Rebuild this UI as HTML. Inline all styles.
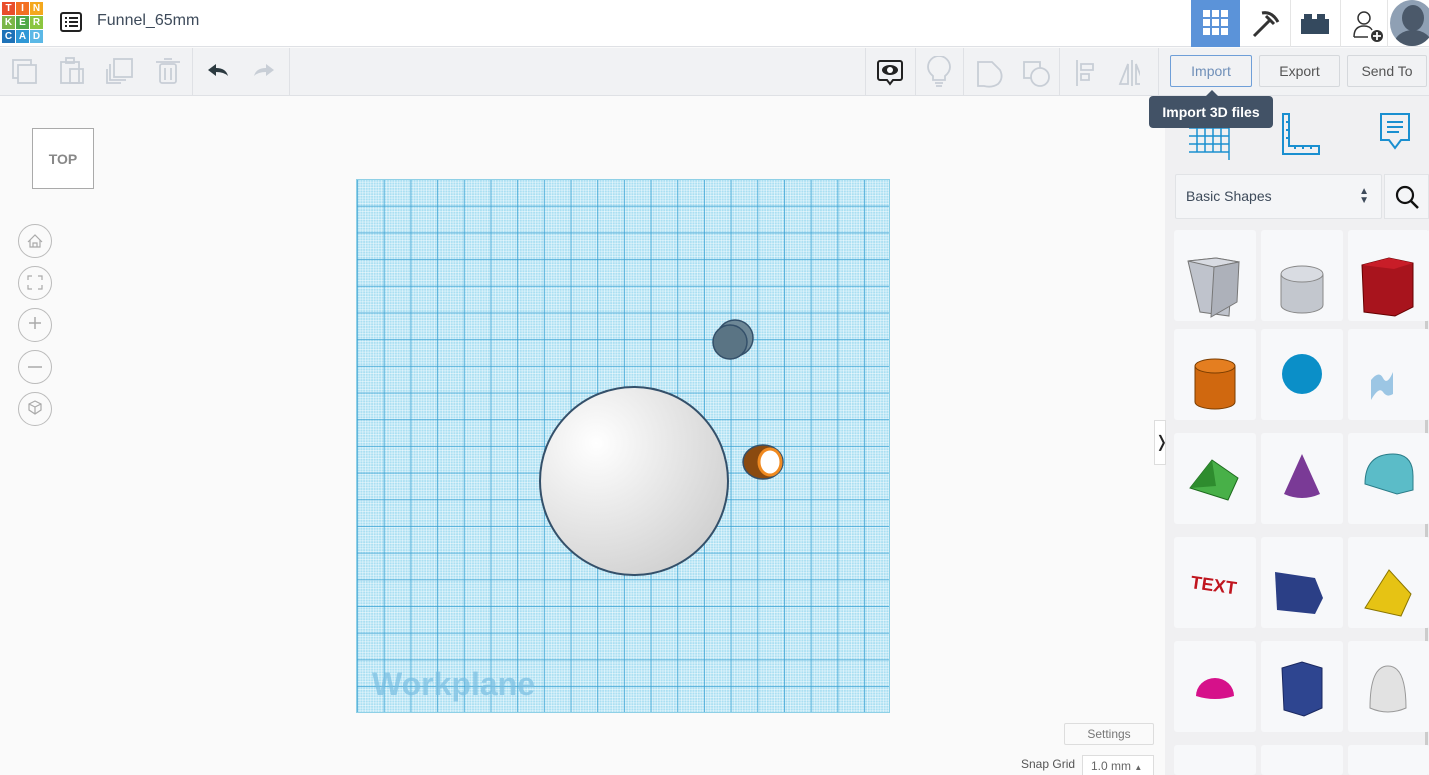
<!DOCTYPE html>
<html><head><meta charset="utf-8">
<style>
*{margin:0;padding:0;box-sizing:border-box}
html,body{width:1429px;height:775px;overflow:hidden}
body{background:#fafafa;font-family:"Liberation Sans",sans-serif;position:relative}
.abs{position:absolute}
#hdr{left:0;top:0;width:1429px;height:47px;background:#fff;border-bottom:1px solid #dfe1e5}
#tb{left:0;top:48px;width:1429px;height:48px;background:#f1f2f4;border-bottom:1px solid #dfe1e5}
.logo div{position:absolute;width:13px;height:13px;color:#fff;font-size:10px;font-weight:bold;text-align:center;line-height:13px}
.sep{position:absolute;top:48px;width:1px;height:47px;background:#dfe1e5}
.btn{position:absolute;top:55px;height:32px;border:1px solid #d5d8dc;border-radius:2px;font-size:14px;color:#555;text-align:center;line-height:30px;background:#f1f2f4}
#panel{left:1165px;top:96px;width:264px;height:679px;background:#f0f0f2}
.tile{position:absolute;width:82px;height:91px;background:#f7f8fa;border-radius:3px}
.circ{position:absolute;left:18px;width:34px;height:34px;border:1px solid #bbb;border-radius:50%;background:#fafafa}
#wp{left:356px;top:179px;width:534px;height:534px;background-color:#aadff2;
background-image:
linear-gradient(90deg,rgba(55,160,210,.75) 1px,transparent 1px),
linear-gradient(0deg,rgba(55,160,210,.75) 1px,transparent 1px),
linear-gradient(90deg,rgba(255,255,255,.5) 1px,transparent 1px),
linear-gradient(0deg,rgba(255,255,255,.5) 1px,transparent 1px);
background-size:26.7px 26.7px,26.7px 26.7px,2.67px 2.67px,2.67px 2.67px;border:1px solid #8fd0e6}
</style></head><body>
<div id="hdr" class="abs"></div>
<div class="abs logo" style="left:2px;top:2px;width:44px;height:44px">
<div style="left:0;top:0;background:#e94e2b">T</div><div style="left:14px;top:0;background:#f37021">I</div><div style="left:28px;top:0;background:#f4a81d">N</div>
<div style="left:0;top:14px;background:#7bb648">K</div><div style="left:14px;top:14px;background:#4fa847">E</div><div style="left:28px;top:14px;background:#8cc63f">R</div>
<div style="left:0;top:28px;background:#1e72b8">C</div><div style="left:14px;top:28px;background:#2f98d6">A</div><div style="left:28px;top:28px;background:#5bb8e6">D</div>
</div>
<svg class="abs" style="left:60px;top:11px" width="22" height="22" viewBox="0 0 22 22"><rect x="1" y="2" width="20" height="18" rx="2" fill="none" stroke="#222" stroke-width="2"/><g fill="#222"><rect x="5" y="6" width="2" height="2"/><rect x="9" y="6" width="9" height="2"/><rect x="5" y="10" width="2" height="2"/><rect x="9" y="10" width="9" height="2"/><rect x="5" y="14" width="2" height="2"/><rect x="9" y="14" width="9" height="2"/></g></svg>
<div class="abs" style="left:97px;top:12px;font-size:16px;color:#3d4a5a">Funnel_65mm</div>
<div class="abs" style="left:1191px;top:0;width:49px;height:47px;background:#5b93d9"></div>
<svg class="abs" style="left:1203px;top:10px" width="26" height="26"><g fill="#fff"><rect x="0" y="0" width="7" height="7"/><rect x="9" y="0" width="7" height="7"/><rect x="18" y="0" width="7" height="7"/><rect x="0" y="9" width="7" height="7"/><rect x="9" y="9" width="7" height="7"/><rect x="18" y="9" width="7" height="7"/><rect x="0" y="18" width="7" height="7"/><rect x="9" y="18" width="7" height="7"/><rect x="18" y="18" width="7" height="7"/></g></svg>
<svg class="abs" style="left:1250px;top:8px" width="32" height="32"><path d="M4 28 L20 12 M12 5 Q22 3 28 14 M16 8 L24 16" stroke="#333" stroke-width="3" fill="none"/></svg>
<div class="abs" style="left:1290px;top:0;width:1px;height:47px;background:#e5e5e5"></div>
<svg class="abs" style="left:1301px;top:14px" width="28" height="20"><rect x="0" y="5" width="28" height="15" fill="#34495e"/><rect x="3" y="0" width="8" height="6" fill="#34495e"/><rect x="16" y="0" width="8" height="6" fill="#34495e"/></svg>
<div class="abs" style="left:1340px;top:0;width:1px;height:47px;background:#e5e5e5"></div>
<svg class="abs" style="left:1352px;top:9px" width="36" height="36"><circle cx="12" cy="9" r="6" fill="none" stroke="#333" stroke-width="1.5"/><path d="M2 28 Q2 17 12 17 Q18 17 20 21 M2 28 H16" fill="none" stroke="#333" stroke-width="1.5"/><circle cx="25" cy="27" r="6" fill="#333"/><path d="M25 23v8M21 27h8" stroke="#fff" stroke-width="1.8"/></svg>
<div class="abs" style="left:1387px;top:0;width:1px;height:47px;background:#e5e5e5"></div>
<div class="abs" style="left:1390px;top:0;width:39px;height:46px;overflow:hidden"><div style="position:absolute;left:0;top:0;width:44px;height:46px;border-radius:50%;background:#8fa0b4;overflow:hidden"><div style="position:absolute;left:12px;top:5px;width:22px;height:26px;border-radius:50%;background:#4b596a"></div><div style="position:absolute;left:4px;top:30px;width:38px;height:30px;border-radius:50%;background:#4b596a"></div></div></div>

<div id="tb" class="abs"></div>
<svg class="abs" style="left:0;top:55px" width="290" height="34" fill="none" stroke="#c8ced6" stroke-width="1.8">
<rect x="13" y="5" width="18" height="18"/><rect x="18" y="10" width="18" height="18" fill="#f1f2f4"/>
<rect x="61" y="7" width="18" height="21"/><rect x="66" y="3" width="8" height="5"/><rect x="70" y="14" width="13" height="14"/>
<rect x="114" y="4" width="18" height="18"/><path d="M110 9v16h16"/><path d="M107 14v14h14"/>
<rect x="160" y="9" width="16" height="19" rx="2"/><path d="M156 7h24M164 4h8M165 13v12M171 13v12"/>
</svg>
<div class="sep" style="left:192px"></div>
<svg class="abs" style="left:200px;top:58px" width="80" height="26"><path d="M8 12 L16 6 V10 Q26 10 28 18 Q24 14 16 14 V18 Z" fill="#2c3a40"/><path d="M74 12 L66 6 V10 Q56 10 54 18 Q58 14 66 14 V18 Z" fill="#c8ced6"/></svg>
<div class="sep" style="left:289px"></div>
<div class="sep" style="left:865px"></div>
<svg class="abs" style="left:876px;top:58px" width="28" height="30"><path d="M4 3h20a2 2 0 0 1 2 2v15a2 2 0 0 1-2 2h-7l-3 4-3-4H4a2 2 0 0 1-2-2V5a2 2 0 0 1 2-2z" fill="none" stroke="#222" stroke-width="2"/><ellipse cx="14" cy="12" rx="8" ry="5" fill="#222"/><circle cx="14" cy="12" r="3" fill="#fff"/></svg>
<div class="sep" style="left:915px"></div>
<svg class="abs" style="left:920px;top:56px" width="220" height="34" fill="none" stroke="#c8ced6" stroke-width="1.8">
<path d="M13 20 Q8 16 8 11 a11 11 0 0 1 22 0 Q30 16 25 20 V24 H13 Z M15 27h8M16 30h6"/>
<path d="M58 6h14l8 8q4 8-2 14q-6 4-14 2h-6z"/>
<rect x="104" y="6" width="16" height="16"/><circle cx="120" cy="21" r="9" fill="#f1f2f4"/>
<path d="M157 4v26M161 8h12v6h-12zM161 18h8v6h-8z"/>
<path d="M212 4v26M208 8l-8 20h8zM216 8l8 20h-8z"/>
</svg>
<div class="sep" style="left:963px"></div><div class="sep" style="left:1059px"></div><div class="sep" style="left:1158px"></div>
<div class="btn" style="left:1170px;width:82px;border-color:#6f9fd8;color:#6f8fb8">Import</div>
<div class="btn" style="left:1259px;width:81px">Export</div>
<div class="btn" style="left:1347px;width:80px">Send To</div>

<div id="panel" class="abs"></div>
<svg class="abs" style="left:1165px;top:110px" width="264" height="50" fill="none" stroke="#1a8fd0" stroke-width="2">
<path d="M24 18h40v36M24 26h40M24 34h40M24 42h40M32 18v24M40 18v24M48 18v24M56 18v24" stroke-width="1.5"/>
<path d="M118 4h6v32h30v8H118zM124 12h-3M124 20h-3M124 28h-3M130 36v3M138 36v3M146 36v3"/>
<path d="M216 4h28v26h-8l-6 8-6-8h-8z M222 12h16M222 17h16M222 22h12"/>
</svg>
<div class="abs" style="left:1149px;top:96px;width:124px;height:32px;background:#425266;border-radius:4px;color:#fff;font-size:14px;font-weight:bold;line-height:32px;text-align:center">Import 3D files</div>
<div class="abs" style="left:1206px;top:90px;width:0;height:0;border-left:6px solid transparent;border-right:6px solid transparent;border-bottom:6px solid #425266"></div>
<div class="abs" style="left:1175px;top:174px;width:207px;height:45px;background:#f4f5f7;border:1px solid #e1e3e6;border-radius:2px;font-size:14px;color:#3d4a5a;padding:13px 10px">Basic Shapes<span style="position:absolute;right:12px;top:12px;font-size:10px;line-height:9px">▲<br>▼</span></div>
<div class="abs" style="left:1384px;top:174px;width:45px;height:45px;background:#f4f5f7;border:1px solid #e1e3e6"></div>
<svg class="abs" style="left:1393px;top:184px" width="28" height="28"><circle cx="12" cy="11" r="8" fill="none" stroke="#111" stroke-width="2.2"/><path d="M18 17l7 7" stroke="#111" stroke-width="2.5"/></svg>
<div class="abs" style="left:1425px;top:230px;width:3px;height:545px;background:#ccc"></div>

<div class="tile" style="left:1174px;top:230px"></div><div class="tile" style="left:1261px;top:230px"></div><div class="tile" style="left:1348px;top:230px"></div>
<div class="tile" style="left:1174px;top:329px"></div><div class="tile" style="left:1261px;top:329px"></div><div class="tile" style="left:1348px;top:329px"></div>
<div class="tile" style="left:1174px;top:433px"></div><div class="tile" style="left:1261px;top:433px"></div><div class="tile" style="left:1348px;top:433px"></div>
<div class="tile" style="left:1174px;top:537px"></div><div class="tile" style="left:1261px;top:537px"></div><div class="tile" style="left:1348px;top:537px"></div>
<div class="tile" style="left:1174px;top:641px"></div><div class="tile" style="left:1261px;top:641px"></div><div class="tile" style="left:1348px;top:641px"></div>
<div class="tile" style="left:1174px;top:745px;height:30px"></div><div class="tile" style="left:1261px;top:745px;height:30px"></div><div class="tile" style="left:1348px;top:745px;height:30px"></div>
<svg class="abs" style="left:1165px;top:230px" width="264" height="545">
<path d="M23 31l28-3 23 4-7 8-3 46-29-4z" fill="#bfc3cc" stroke="#777"/>
<path d="M23 31l28-3 23 4-25 5z" fill="#d8dbe2" stroke="#777"/><path d="M49 37l25-5-2 40-26 15z" fill="#adb1ba" stroke="#777"/>
<path d="M116 45v30a21 8 0 0 0 42 0v-30z" fill="#c3c7ce" stroke="#888"/><ellipse cx="137" cy="44" rx="21" ry="8" fill="#d9dce2" stroke="#888"/>
<path d="M197 35l27-7 24 5v44l-18 9-31-4z" fill="#a8141d" stroke="#600"/>
<path d="M197 35l27-7 24 5-19 6z" fill="#c81d28"/>
<path d="M30 136v36a20 7 0 0 0 40 0v-36z" fill="#d0680f" stroke="#7a3d00"/><ellipse cx="50" cy="136" rx="20" ry="7" fill="#e47e20" stroke="#7a3d00"/>
<circle cx="137" cy="144" r="20" fill="#0b8fc8"/>
<path d="M206 170v-20q8-10 12-2t10-6v22q-6 4-10-2t-12 8z" fill="#9cc6e4"/>
<g transform="translate(0,-18)">
<path d="M25 276l22-28 26 18-10 22z" fill="#48b048" stroke="#1d6b1d"/><path d="M25 276l22-28 4 26z" fill="#2e8c2e"/>
<path d="M137 242l-18 40q18 8 36 0z" fill="#7a3a96"/>
<path d="M200 272q0-30 28-30q20 0 20 22v14l-16 4z" fill="#5bbcc8" stroke="#2a7c88"/>
</g>
<text x="26" y="360" font-size="18" font-weight="bold" fill="#c0161f" font-family="Liberation Sans" transform="rotate(8 40 352)">TEXT</text>
<path d="M110 52l40 6 8 20-8 16-38-4z" transform="translate(0,290)" fill="#2b3f86"/>
<path d="M224 340l-24 38 36 8 10-22z" fill="#e6c314" stroke="#8a7500"/>
<path d="M31 466a19 18 0 0 1 38 0q-19 6-38 0z" fill="#d6118a"/>
<path d="M117 438l20-6 20 6v40l-18 8-20-6z" fill="#2e4590" stroke="#1a2860"/>
<path d="M205 478q0-42 18-42t18 42q-18 8-36 0z" fill="#e2e2e2" stroke="#999"/>
</svg>
<div class="abs" style="left:1154px;top:420px;width:12px;height:45px;background:#fff;border:1px solid #ddd;font-size:16px;line-height:43px;text-align:center;color:#222">❭</div>

<div class="abs" style="left:32px;top:128px;width:62px;height:61px;border:1px solid #aaa;background:#fff;color:#888;font-size:14px;font-weight:bold;text-align:center;line-height:60px">TOP</div>
<div class="circ" style="top:224px"></div><div class="circ" style="top:266px"></div><div class="circ" style="top:308px"></div><div class="circ" style="top:350px"></div><div class="circ" style="top:392px"></div>
<svg class="abs" style="left:18px;top:224px" width="34" height="204" fill="none" stroke="#aaa" stroke-width="1.2">
<path d="M10 18l7-7 7 7M12 16v7h10v-7M15 23v-4h4v4"/>
<path d="M10 56v-4h4M20 52h4v4M24 61v4h-4M14 65h-4v-4"/>
<path d="M17 93v12M11 99h12" stroke-width="1.5"/>
<path d="M10 143h14" stroke-width="1.5"/>
<path d="M11 180l6-3 6 3v6l-6 4-6-4zM11 180l6 3 6-3M17 183v7"/>
</svg>

<div id="wp" class="abs"></div>
<div class="abs" style="left:372px;top:666px;font-size:32px;font-weight:bold;color:rgba(120,190,225,.7)">Workplane</div>
<svg class="abs" style="left:530px;top:310px" width="270" height="280">
<defs><radialGradient id="g" cx="0.3" cy="0.3" r="0.8"><stop offset="0" stop-color="#fff"/><stop offset="1" stop-color="#d0d0d0"/></radialGradient></defs>
<circle cx="104" cy="171" r="94" fill="url(#g)" stroke="#34506a" stroke-width="2"/>
<circle cx="205" cy="28" r="18" fill="#6d8796" stroke="#34506a" stroke-width="1.5"/>
<circle cx="200" cy="32" r="17" fill="#5a7484" stroke="#34506a" stroke-width="1.5"/>
<ellipse cx="233" cy="152" rx="20" ry="17" fill="#8a4a10" stroke="#34506a" stroke-width="1.5"/>
<ellipse cx="240" cy="152" rx="11" ry="13" fill="#fff" stroke="#f08a20" stroke-width="3"/>
</svg>

<div class="abs" style="left:1064px;top:723px;width:90px;height:22px;border:1px solid #ddd;border-radius:2px;background:#fafafa;font-size:12px;color:#777;text-align:center;line-height:20px">Settings</div>
<div class="abs" style="left:1021px;top:757px;font-size:12px;color:#555">Snap Grid</div>
<div class="abs" style="left:1082px;top:755px;width:72px;height:20px;border:1px solid #ddd;border-bottom:none;background:#fff;font-size:12px;color:#666;padding:3px 8px">1.0 mm <span style="font-size:8px">▲</span></div>
</body></html>
